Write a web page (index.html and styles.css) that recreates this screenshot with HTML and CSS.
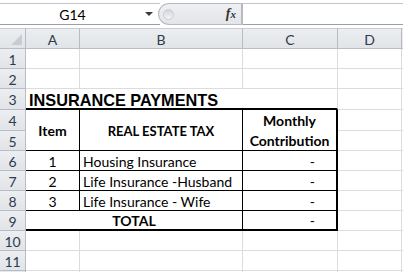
FILE: index.html
```html
<!DOCTYPE html>
<html lang="en">
<head>
  <meta charset="UTF-8">
  <title>Insurance Payments</title>
  <link rel="stylesheet" href="styles.css">
</head>
<body>
  <div class="formula-bar">
    <div class="name-box"><span class="cell-ref">G14</span><span class="drop"></span></div>
    <div class="fx-box"><span class="grip"></span><span class="fx">f<span class="fx-x">x</span></span></div>
    <div class="formula-input"></div>
  </div>

  <div class="sheet">
    <div class="corner"><span class="tri"></span></div>
    <div class="col-head">A</div>
    <div class="col-head">B</div>
    <div class="col-head">C</div>
    <div class="col-head">D</div>
    <div class="col-head edge"></div>

    <div class="row-head">1</div>
    <div class="cell"></div><div class="cell"></div><div class="cell"></div><div class="cell"></div><div class="cell edge"></div>

    <div class="row-head">2</div>
    <div class="cell"></div><div class="cell"></div><div class="cell"></div><div class="cell"></div><div class="cell edge"></div>

    <div class="row-head">3</div>
    <div class="cell title">INSURANCE PAYMENTS</div>
    <div class="cell"></div><div class="cell edge"></div>

    <div class="row-head">4</div>
    <div class="cell tb tall head">Item</div>
    <div class="cell tb tall head small">REAL ESTATE TAX</div>
    <div class="cell tb tall head last">Monthly<br>Contribution</div>
    <div class="cell"></div><div class="cell edge"></div>

    <div class="row-head">5</div>
    <div class="cell"></div><div class="cell edge"></div>

    <div class="row-head">6</div>
    <div class="cell tb num">1</div>
    <div class="cell tb name">Housing Insurance</div>
    <div class="cell tb last amount">-</div>
    <div class="cell"></div><div class="cell edge"></div>

    <div class="row-head">7</div>
    <div class="cell tb num">2</div>
    <div class="cell tb name">Life Insurance -Husband</div>
    <div class="cell tb last amount">-</div>
    <div class="cell"></div><div class="cell edge"></div>

    <div class="row-head">8</div>
    <div class="cell tb num">3</div>
    <div class="cell tb name">Life Insurance - Wife</div>
    <div class="cell tb last amount">-</div>
    <div class="cell"></div><div class="cell edge"></div>

    <div class="row-head">9</div>
    <div class="cell tb bottom total">TOTAL</div>
    <div class="cell tb bottom last amount">-</div>
    <div class="cell"></div><div class="cell edge"></div>

    <div class="row-head">10</div>
    <div class="cell"></div><div class="cell"></div><div class="cell"></div><div class="cell"></div><div class="cell edge"></div>

    <div class="row-head">11</div>
    <div class="cell"></div><div class="cell"></div><div class="cell"></div><div class="cell"></div><div class="cell edge"></div>

    <div class="row-head stub"></div>
    <div class="cell stub"></div><div class="cell stub"></div><div class="cell stub"></div><div class="cell stub"></div><div class="cell stub edge"></div>
  </div>
</body>
</html>
```

FILE: styles.css
```css
body {
  margin: 0;
  width: 403px;
  height: 272px;
  overflow: hidden;
  background: #fff;
  font-family: Lato, "Liberation Sans", sans-serif;
  color: #000;
}

/* formula bar */
.formula-bar {
  display: flex;
  height: 28px;
  box-sizing: border-box;
  padding-top: 3px;
  padding-bottom: 3px;
  background: #fff;
}

.name-box {
  width: 160px;
  box-sizing: border-box;
  border-top: 1px solid #c2c6cc;
  border-bottom: 1px solid #9aa0a8;
  display: flex;
  align-items: center;
  font-size: 14px;
}

.cell-ref {
  width: 145px;
  text-align: center;
  padding-top: 1px;
}

.drop {
  width: 0;
  height: 0;
  border-left: 4px solid transparent;
  border-right: 4px solid transparent;
  border-top: 4px solid #3c3c3c;
}

.fx-box {
  width: 85px;
  margin-left: -2px;
  box-sizing: border-box;
  border: 1px solid #b6bbc2;
  border-right: 2px solid #b6bbc2;
  border-radius: 11px 0 0 11px;
  background: linear-gradient(#eef0f3, #e2e5e9);
  display: flex;
  align-items: center;
  justify-content: space-between;
  padding: 0 5px 0 4px;
}

.grip {
  width: 9px;
  height: 9px;
  border-radius: 50%;
  background: linear-gradient(#d2d5da, #f4f5f7);
  border: 1px solid #c8ccd1;
}

.fx {
  font-family: "Liberation Serif", serif;
  font-style: italic;
  font-weight: bold;
  font-size: 14px;
  color: #333;
}

.fx-x {
  font-size: 11px;
}

.formula-input {
  flex: 1;
  box-sizing: border-box;
  border-top: 1px solid #c2c6cc;
  border-bottom: 1px solid #9aa0a8;
}

/* sheet grid */
.sheet {
  display: grid;
  grid-template-columns: 26px 54px 163px 95px 64px 1fr;
  grid-template-rows: 21px 20px 20px 21px 21px 20px 20px 20px 20px 20px 20px 20px 1px;
  font-size: 14px;
}

.corner,
.col-head,
.row-head {
  box-sizing: border-box;
  background: linear-gradient(#eceef1, #e1e4e8);
  border-right: 1px solid #b9bdc3;
  border-bottom: 1px solid #b9bdc3;
  color: #2d3b4e;
  display: flex;
  align-items: center;
  justify-content: center;
}

.corner,
.col-head {
  border-top: 1px solid #c9cdd2;
  padding-top: 1px;
}

.corner {
  position: relative;
}

.tri {
  position: absolute;
  right: 3px;
  bottom: 3px;
  width: 0;
  height: 0;
  border-left: 11px solid transparent;
  border-bottom: 11px solid #c9cdd3;
}

.row-head {
  padding-top: 1px;
}

.cell {
  box-sizing: border-box;
  border-right: 1px solid #dadcdf;
  border-bottom: 1px solid #dadcdf;
  display: flex;
  align-items: center;
  white-space: nowrap;
}

.stub {
  border-bottom: none;
}

.edge {
  border-right: none;
}

.title {
  grid-column: span 3;
  border-right: 1px solid #dadcdf;
  border-bottom: 2px solid #000;
  font-family: "Liberation Sans", Arial, sans-serif;
  font-weight: bold;
  font-size: 16.3px;
  padding: 3px 0 0 3px;
}

.tb {
  border-right-color: #000;
  border-bottom-color: #000;
}

.tb.last {
  border-right: 2px solid #000;
}

.tb.bottom {
  border-bottom: 2px solid #000;
}

.tall {
  grid-row: span 2;
}

.head {
  justify-content: center;
  text-align: center;
  font-weight: bold;
  line-height: 20px;
  padding-top: 1px;
}

.head.small {
  font-size: 13px;
}

.num {
  justify-content: center;
  padding-top: 1px;
}

.name {
  padding: 1px 0 0 3px;
}

.amount {
  justify-content: flex-end;
  padding: 1px 21px 0 0;
}

.total {
  grid-column: span 2;
  justify-content: center;
  font-weight: bold;
  padding-top: 1px;
}
```
